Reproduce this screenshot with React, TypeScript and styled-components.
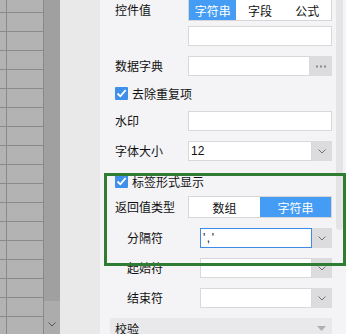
import React from "react";
import styled, { createGlobalStyle } from "styled-components";

const Global = createGlobalStyle`
  html, body { margin: 0; padding: 0; }
  body {
    width: 346px; height: 334px; overflow: hidden;
    font-family: "Noto Sans CJK SC", "Noto Sans", sans-serif;
    font-size: 12px; color: #111;
  }
`;

const Page = styled.div`
  display: flex;
  width: 346px;
  height: 334px;
  overflow: hidden;
  position: relative;
`;

const Sheet = styled.div`
  width: 44px;
  flex: none;
  background-color: #b3b3b3;
  background-image:
    linear-gradient(to bottom, #8a8a8a 0, #8a8a8a 1px, transparent 1px),
    linear-gradient(to right, transparent 6px, #8a8a8a 6px, #8a8a8a 7px, transparent 7px, transparent 43px, #8a8a8a 43px);
  background-size: 100% 19px, 100% 100%;
  background-position: 0 12px, 0 0;
  background-repeat: repeat-y, no-repeat;
`;

const SheetScroll = styled.div`
  width: 16px;
  flex: none;
  display: flex;
  flex-direction: column;
  background: #acacac;
`;

const SheetThumb = styled.div`
  height: 301px;
  background: #a0a0a0;
`;

const SheetTrack = styled.div`
  flex: 1;
`;

const SheetArrow = styled.div`
  height: 12px;
  display: flex;
  align-items: flex-start;
  justify-content: center;
`;

const Gutter = styled.div`
  width: 40px;
  flex: none;
  background: #e9e9e9;
`;

const Panel = styled.div`
  width: 246px;
  flex: none;
  background: #f4f4f6;
  display: flex;
`;

const Form = styled.div`
  width: 236px;
  box-sizing: border-box;
  padding: 0 4px 0 15px;
  display: flex;
  flex-direction: column;
`;

const PanelScroll = styled.div`
  width: 10px;
  display: flex;
`;

const PanelThumb = styled.div`
  width: 7px;
  height: 230px;
  background: #e4e4e6;
  border-radius: 0 0 4px 4px;
`;

const Row = styled.div<{ $mt: number; $h?: number; $indent?: boolean }>`
  display: flex;
  align-items: center;
  margin-top: ${(p) => p.$mt}px;
  height: ${(p) => p.$h ?? 20}px;
  padding-left: ${(p) => (p.$indent ? 12 : 0)}px;
  flex: none;
`;

const Label = styled.div`
  width: 73px;
  flex: none;
  line-height: 14px;
  white-space: nowrap;
`;

const Segmented = styled.div`
  flex: 1;
  height: 22px;
  box-sizing: border-box;
  border: 1px solid #d6d6d8;
  background: #fff;
  display: flex;
`;

const Seg = styled.div<{ $on?: boolean }>`
  flex: 1;
  display: flex;
  align-items: center;
  justify-content: center;
  background: ${(p) => (p.$on ? "#449cf5" : "#fff")};
  color: ${(p) => (p.$on ? "#fff" : "#111")};
  font-size: 12px;
`;

const Field = styled.div<{ $focus?: boolean; $spaced?: boolean }>`
  flex: 1;
  height: 20px;
  box-sizing: border-box;
  border: 1px solid ${(p) => (p.$focus ? "#3d8be6" : "#d8d8da")};
  background: #fff;
  display: flex;
  align-items: center;
  padding-left: 2px;
  font-family: "Liberation Sans", "Noto Sans", sans-serif;
  font-size: 12px;
  letter-spacing: ${(p) => (p.$spaced ? "1.5px" : "0")};
  color: #111;
`;

const Combo = styled.div`
  flex: 1;
  display: flex;
  height: 20px;
`;

const DropBtn = styled.div<{ $w?: number }>`
  width: ${(p) => p.$w ?? 20}px;
  flex: none;
  height: 20px;
  background: #dcdcdf;
  display: flex;
  align-items: center;
  justify-content: center;
`;

const CheckRow = styled.div`
  display: flex;
  align-items: center;
  gap: 4px;
`;

const Box = styled.div`
  width: 13px;
  height: 13px;
  background: #3f90e8;
  border-radius: 1px;
  display: flex;
  align-items: center;
  justify-content: center;
`;

const Section = styled.div`
  margin: 10px 0 0 -5px;
  padding: 0 6px 0 5px;
  height: 20px;
  background: #e9e9eb;
  display: flex;
  align-items: center;
  justify-content: space-between;
  flex: none;
`;

const Highlight = styled.div`
  position: absolute;
  left: 104px;
  top: 173px;
  width: 242px;
  height: 93px;
  box-sizing: border-box;
  border: 3px solid #2e7d32;
  pointer-events: none;
`;

const Chevron = ({ color = "#707070" }: { color?: string }) => (
  <svg width="8" height="5" viewBox="0 0 8 5">
    <path d="M0.5 0.5 L4 4 L7.5 0.5" fill="none" stroke={color} strokeWidth="1" />
  </svg>
);

const Dots = () => (
  <svg width="12" height="3" viewBox="0 0 12 3">
    <rect x="1" y="0.5" width="2" height="2" fill="#8a8a8a" />
    <rect x="5" y="0.5" width="2" height="2" fill="#8a8a8a" />
    <rect x="9" y="0.5" width="2" height="2" fill="#8a8a8a" />
  </svg>
);

const Check = () => (
  <svg width="11" height="11" viewBox="0 0 11 11">
    <path d="M1.5 5.5 L4.3 8.3 L9.6 2.2" fill="none" stroke="#fff" strokeWidth="1.8" />
  </svg>
);

const Caret = () => (
  <svg width="9" height="5" viewBox="0 0 9 5">
    <path d="M0 0 L9 0 L4.5 5 Z" fill="#b0b0b2" />
  </svg>
);

const Select = ({ value = "", focus = false, spaced = false }: { value?: string; focus?: boolean; spaced?: boolean }) => (
  <Combo>
    <Field $focus={focus} $spaced={spaced}>{value}</Field>
    <DropBtn>
      <Chevron />
    </DropBtn>
  </Combo>
);

export default function App() {
  return (
    <>
      <Global />
      <Page>
        <Sheet />
        <SheetScroll>
          <SheetThumb />
          <SheetTrack />
          <SheetArrow>
            <Chevron color="#555" />
          </SheetArrow>
        </SheetScroll>
        <Gutter />
        <Panel>
          <Form>
            <Row $mt={-1} $h={22}>
              <Label>控件值</Label>
              <Segmented>
                <Seg $on>字符串</Seg>
                <Seg>字段</Seg>
                <Seg>公式</Seg>
              </Segmented>
            </Row>
            <Row $mt={5}>
              <Label />
              <Field />
            </Row>
            <Row $mt={10}>
              <Label>数据字典</Label>
              <Combo>
                <Field />
                <DropBtn $w={22}>
                  <Dots />
                </DropBtn>
              </Combo>
            </Row>
            <Row $mt={10} $h={15}>
              <CheckRow>
                <Box>
                  <Check />
                </Box>
                去除重复项
              </CheckRow>
            </Row>
            <Row $mt={10}>
              <Label>水印</Label>
              <Field />
            </Row>
            <Row $mt={10}>
              <Label>字体大小</Label>
              <Select value="12" />
            </Row>
            <Row $mt={13} $h={15}>
              <CheckRow>
                <Box>
                  <Check />
                </Box>
                标签形式显示
              </CheckRow>
            </Row>
            <Row $mt={7} $h={22}>
              <Label>返回值类型</Label>
              <Segmented>
                <Seg>数组</Seg>
                <Seg $on>字符串</Seg>
              </Segmented>
            </Row>
            <Row $mt={10} $indent>
              <Label>分隔符</Label>
              <Select value="','" focus spaced />
            </Row>
            <Row $mt={10} $indent>
              <Label>起始符</Label>
              <Select />
            </Row>
            <Row $mt={10} $indent>
              <Label>结束符</Label>
              <Select />
            </Row>
            <Section>
              <span>校验</span>
              <Caret />
            </Section>
          </Form>
          <PanelScroll>
            <PanelThumb />
          </PanelScroll>
        </Panel>
        <Highlight />
      </Page>
    </>
  );
}
